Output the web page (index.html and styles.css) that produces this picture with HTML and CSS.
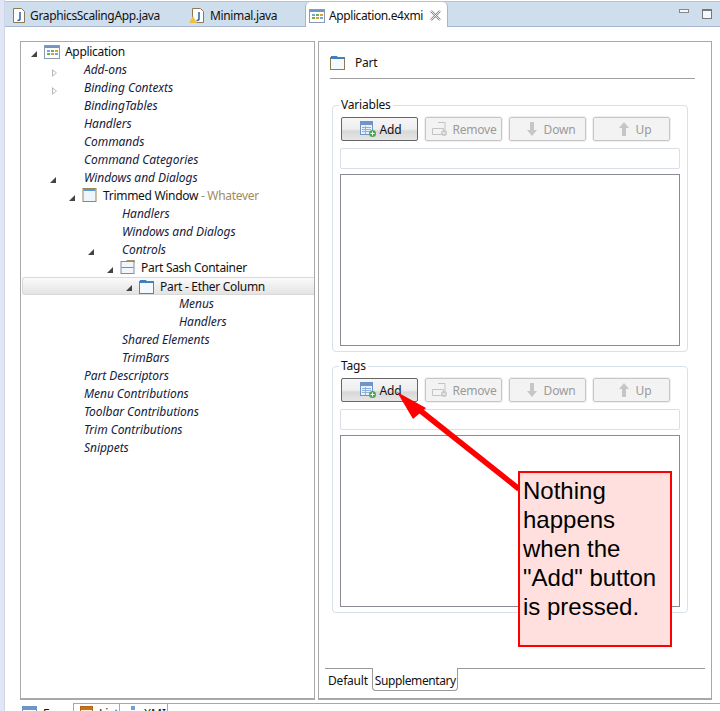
FILE: index.html
```html
<!DOCTYPE html>
<html lang="en">
<head>
    <meta charset="UTF-8">
    <title>Application.e4xmi</title>
    <link rel="stylesheet" href="styles.css">
</head>
<body>
    <svg class="defs" width="0" height="0">
        <symbol id="i-app" viewBox="0 0 16 14">
            <rect x=".5" y=".5" width="15" height="13" fill="#fff" stroke="#8a9ab5"/>
            <rect x="1" y="1" width="14" height="2" fill="#6f94c8"/>
            <rect x="3" y="5" width="3" height="2" fill="#6fa8dc"/>
            <rect x="7" y="5" width="3" height="2" fill="#70b04c"/>
            <rect x="11" y="5" width="3" height="2" fill="#e0a030"/>
            <rect x="3" y="8" width="3" height="2" fill="#70b04c"/>
            <rect x="7" y="8" width="3" height="2" fill="#e0a030"/>
            <rect x="11" y="8" width="3" height="2" fill="#6fa8dc"/>
        </symbol>
        <symbol id="i-part" viewBox="0 0 16 15">
            <rect x=".5" y="2.500" width="14" height="12" fill="#f4f9fd" stroke="#8d7a55"/>
            <path d="M1 2.500V1h6l1 1.500h6.500V4H1z" fill="#3f7fc0"/>
        </symbol>
        <symbol id="i-win" viewBox="0 0 15 15">
            <rect x=".5" y=".5" width="13" height="13" fill="#eef6fc" stroke="#9a8558"/>
            <rect x="1" y="1" width="12" height="2" fill="#5b9bd5"/>
        </symbol>
        <symbol id="i-sash" viewBox="0 0 15 15">
            <rect x=".5" y="1.500" width="13" height="12" fill="#f2f6fb" stroke="#7d8cad"/>
            <path d="M1 7.500h12" stroke="#7d8cad"/>
            <path d="M6 .5h8v2" fill="none" stroke="#a3946d"/>
        </symbol>
        <symbol id="i-table" viewBox="0 0 16 16">
            <rect x=".5" y=".5" width="12" height="13" fill="#e8f0fa" stroke="#6f94c8"/>
            <rect x="1" y="1" width="11" height="3" fill="#6f94c8"/>
            <path d="M2 6.500h9M2 8.500h9M2 10.500h9M5.500 5v8" stroke="#8fb0d8"/>
            <circle cx="12.500" cy="12.500" r="3.500" fill="#4ea64e"/>
            <path d="M10.500 12.500h4M12.500 10.500v4" stroke="#fff"/>
        </symbol>
        <symbol id="i-remove" viewBox="0 0 16 16">
            <path d="M6 1.500h7v10M.5 7.500h11v6H.5z" fill="none" stroke="#c4c4c4"/>
            <circle cx="12" cy="12" r="3" fill="#c8c8c8"/>
            <path d="M10.500 12h3" stroke="#fff"/>
        </symbol>
        <symbol id="i-down" viewBox="0 0 10 14">
            <path d="M3 0h4v8h3l-5 6-5-6h3z" fill="#c6c6c6"/>
        </symbol>
        <symbol id="i-up" viewBox="0 0 10 14">
            <path d="M3 14h4V6h3L5 0 0 6h3z" fill="#c6c6c6"/>
        </symbol>
    </svg>

    <div class="side-strip"></div>

    <div class="editor">
        <div class="tabbar">
            <div class="tab tab-java">
                <svg width="12" height="15" viewBox="0 0 12 15"><path d="M.5.5h8l3 3v11H.5z" fill="#fff" stroke="#8d7a55"/><path d="M7 4v7q0 1.500-2.500 1.500" fill="none" stroke="#2b5fa8" stroke-width="1.500"/></svg>
                <span>GraphicsScalingApp.java</span>
            </div>
            <div class="tab tab-min">
                <svg width="15" height="15" viewBox="0 0 15 15"><path d="M3.500.5h8l3 3v11h-11z" fill="#fff" stroke="#8d7a55"/><path d="M10 4v7q0 1.500-2.500 1.500" fill="none" stroke="#2b5fa8" stroke-width="1.500"/><path d="M4 8l4 7H0z" fill="#f0c040"/></svg>
                <span>Minimal.java</span>
            </div>
            <div class="tab tab-active">
                <svg width="16" height="14"><use href="#i-app"/></svg>
                <span>Application.e4xmi</span>
                <svg class="close" width="11" height="11" viewBox="0 0 11 11"><path d="M1 1l9 9M10 1l-9 9" stroke="#8a8a8a" stroke-width="2.400"/><path d="M1 1l9 9M10 1l-9 9" stroke="#fff" stroke-width=".8"/></svg>
            </div>
            <div class="tab-tools">
                <span class="btn-min"></span>
                <span class="btn-max"></span>
            </div>
        </div>

        <div class="workspace">
            <div class="tree">
                <div class="row lv0"><i class="twisty open"></i><svg class="node" width="16" height="14"><use href="#i-app"/></svg><span>Application</span></div>
                <div class="row lv1"><i class="twisty closed"></i><em>Add-ons</em></div>
                <div class="row lv1"><i class="twisty closed"></i><em>Binding Contexts</em></div>
                <div class="row lv1"><i class="twisty"></i><em>BindingTables</em></div>
                <div class="row lv1"><i class="twisty"></i><em>Handlers</em></div>
                <div class="row lv1"><i class="twisty"></i><em>Commands</em></div>
                <div class="row lv1"><i class="twisty"></i><em>Command Categories</em></div>
                <div class="row lv1"><i class="twisty open"></i><em>Windows and Dialogs</em></div>
                <div class="row lv2"><i class="twisty open"></i><svg class="node" width="15" height="15"><use href="#i-win"/></svg><span>Trimmed Window <b class="muted">- Whatever</b></span></div>
                <div class="row lv3"><i class="twisty"></i><em>Handlers</em></div>
                <div class="row lv3"><i class="twisty"></i><em>Windows and Dialogs</em></div>
                <div class="row lv3"><i class="twisty open"></i><em>Controls</em></div>
                <div class="row lv4"><i class="twisty open"></i><svg class="node" width="15" height="15"><use href="#i-sash"/></svg><span>Part Sash Container</span></div>
                <div class="row lv5 selected"><i class="twisty open"></i><svg class="node" width="16" height="15"><use href="#i-part"/></svg><span>Part - Ether Column</span></div>
                <div class="row lv6"><i class="twisty"></i><em>Menus</em></div>
                <div class="row lv6"><i class="twisty"></i><em>Handlers</em></div>
                <div class="row lv3"><i class="twisty"></i><em>Shared Elements</em></div>
                <div class="row lv3"><i class="twisty"></i><em>TrimBars</em></div>
                <div class="row lv1"><i class="twisty"></i><em>Part Descriptors</em></div>
                <div class="row lv1"><i class="twisty"></i><em>Menu Contributions</em></div>
                <div class="row lv1"><i class="twisty"></i><em>Toolbar Contributions</em></div>
                <div class="row lv1"><i class="twisty"></i><em>Trim Contributions</em></div>
                <div class="row lv1"><i class="twisty"></i><em>Snippets</em></div>
            </div>

            <div class="details">
                <div class="details-body">
                    <div class="part-title">
                        <svg width="16" height="15"><use href="#i-part"/></svg>
                        <span>Part</span>
                    </div>

                    <fieldset class="group">
                        <legend>Variables</legend>
                        <div class="buttons">
                            <button class="btn active"><svg width="16" height="16"><use href="#i-table"/></svg>Add</button>
                            <button class="btn"><svg width="16" height="16"><use href="#i-remove"/></svg>Remove</button>
                            <button class="btn move"><svg width="10" height="14"><use href="#i-down"/></svg>Down</button>
                            <button class="btn move"><svg width="10" height="14"><use href="#i-up"/></svg>Up</button>
                        </div>
                        <div class="field"></div>
                        <div class="list"></div>
                    </fieldset>

                    <fieldset class="group">
                        <legend>Tags</legend>
                        <div class="buttons">
                            <button class="btn active"><svg width="16" height="16"><use href="#i-table"/></svg>Add</button>
                            <button class="btn"><svg width="16" height="16"><use href="#i-remove"/></svg>Remove</button>
                            <button class="btn move"><svg width="10" height="14"><use href="#i-down"/></svg>Down</button>
                            <button class="btn move"><svg width="10" height="14"><use href="#i-up"/></svg>Up</button>
                        </div>
                        <div class="field"></div>
                        <div class="list"></div>
                    </fieldset>
                </div>

                <div class="sub-tabs">
                    <div class="sub-tab">Default</div>
                    <div class="sub-tab current">Supplementary</div>
                </div>
            </div>
        </div>

        <div class="bottom-tabs">
            <div class="bottom-tab form-tab">
                <svg width="15" height="12" viewBox="0 0 15 12"><rect x=".5" y=".5" width="14" height="11" fill="#fff" stroke="#6f94c8"/><rect x="1" y="1" width="13" height="3" fill="#6f94c8"/><rect x="2" y="6" width="4" height="2" fill="#4a80c8"/></svg>
                <span>Form</span>
            </div>
            <div class="bottom-tab list-tab">
                <svg width="13" height="12" viewBox="0 0 13 12"><rect x=".5" y=".5" width="12" height="11" fill="#fff4dc" stroke="#b5651d"/><rect x="1" y="1" width="11" height="3" fill="#c8701e"/></svg>
                <span>List</span>
            </div>
            <div class="bottom-tab xmi-tab">
                <svg width="8" height="12" viewBox="0 0 8 12"><rect x="1" y="0" width="4" height="4" fill="#6fa0dc"/><rect x="2" y="5" width="2" height="7" fill="#a8a8a8"/></svg>
                <span>XMI</span>
            </div>
            <div class="bottom-rest"></div>
        </div>
    </div>

    <svg class="arrow" width="720" height="711" viewBox="0 0 720 711">
        <path d="M519 489L412 404" stroke="#ff0000" stroke-width="5.500"/>
        <path d="M397 392L426 408L413 419z" fill="#ff0000"/>
    </svg>
    <div class="callout">Nothing happens when the "Add" button is pressed.</div>
</body>
</html>
```

FILE: styles.css
```css
*{
    margin: 0;
    padding: 0;
    box-sizing: border-box;
}

html, body{
    height: 711px;
    overflow: hidden;
}

body{
    background-color: #fff;
    display: flex;
    font-family: "Noto Sans", sans-serif;
    font-size: 12px;
    color: #111;
    position: relative;
}

.defs{
    position: absolute;
}

.side-strip{
    width: 5px;
    flex: none;
    background-color: #e1e6f6;
    border-right: 1px solid #cfd5e6;
}

.editor{
    flex: 1;
    min-width: 0;
    display: flex;
    flex-direction: column;
}

/* top tabs */
.tabbar{
    height: 26px;
    flex: none;
    margin-top: 1px;
    display: flex;
    background-color: #cfdeed;
    border-top: 1px solid #b6c1d8;
    border-bottom: 1px solid #a9b5cc;
}

.tab{
    display: flex;
    align-items: center;
    height: 24px;
    padding-top: 2px;
    letter-spacing: -0.35px;
}

.tab-java{
    width: 175px;
    padding-left: 8px;
    gap: 5px;
}

.tab-min{
    width: 125px;
    padding-left: 9px;
    gap: 6px;
}

.tab-active{
    width: 143px;
    height: 25px;
    padding-left: 3px;
    gap: 4px;
    letter-spacing: -0.4px;
    background-color: #fff;
    border-left: 1px solid #a9b5cc;
    border-right: 1px solid #a9b5cc;
    border-top-left-radius: 5px;
    border-top-right-radius: 5px;
}

.close{
    margin-left: 3px;
}

.tab-tools{
    margin-left: auto;
    display: flex;
    align-items: flex-start;
    gap: 13px;
    padding: 7px 8px 0 0;
}

.btn-min{
    width: 10px;
    height: 4px;
    background-color: #f4f7fb;
    border: 1px solid #888;
}

.btn-max{
    width: 10px;
    height: 10px;
    background-color: #f4f7fb;
    border: 1px solid #777;
    border-top-width: 2px;
}

/* main area */
.workspace{
    height: 659px;
    flex: none;
    margin-top: 14px;
    display: flex;
    padding-left: 15px;
    gap: 3px;
}

.tree{
    width: 295px;
    flex: none;
    border: 1px solid #a8a8a8;
    border-bottom-width: 2px;
    padding-top: 1px;
}

.lv0{ --lv: 0; }
.lv1{ --lv: 1; }
.lv2{ --lv: 2; }
.lv3{ --lv: 3; }
.lv4{ --lv: 4; }
.lv5{ --lv: 5; }
.lv6{ --lv: 6; }

.row{
    height: 18px;
    display: flex;
    align-items: center;
    white-space: nowrap;
    overflow: hidden;
    letter-spacing: -0.3px;
    padding-left: calc(8px + 19px * var(--lv));
    padding-bottom: 1px;
}

.row em{
    color: #14213d;
    letter-spacing: -0.05px;
}

.twisty{
    width: 36px;
    height: 14px;
    flex: none;
    position: relative;
}

.row:has(.node) .twisty{
    width: 15px;
}

.row .node{
    flex: none;
    width: 16px;
    margin-right: 5px;
}

.twisty.open::before{
    content: "";
    position: absolute;
    left: 2px;
    top: 6px;
    border-style: solid;
    border-width: 0 0 6px 6px;
    border-color: transparent transparent #444 transparent;
}

.twisty.closed::before{
    content: "";
    position: absolute;
    left: 4px;
    top: 6px;
    border-style: solid;
    border-width: 4px 0 4px 5px;
    border-color: transparent transparent transparent #b8b8b8;
}

.twisty.closed::after{
    content: "";
    position: absolute;
    left: 5px;
    top: 8px;
    border-style: solid;
    border-width: 2px 0 2px 3px;
    border-color: transparent transparent transparent #fff;
}

.selected{
    margin-left: 1px;
    background: linear-gradient(#fbfbfb, #e3e3e3);
    border: 1px solid #d9d9d9;
    border-right: none;
    border-radius: 3px 0 0 3px;
    padding-left: calc(6px + 19px * var(--lv));
    padding-bottom: 0;
}

.muted{
    font-weight: normal;
    color: #a38a5e;
    letter-spacing: -0.3px;
}

/* details side */
.details{
    width: 394px;
    flex: none;
    border: 1px solid #a8a8a8;
    border-bottom-width: 2px;
    display: flex;
    flex-direction: column;
}

.details-body{
    flex: 1;
    padding: 13px 16px 0 11px;
}

.part-title{
    display: flex;
    align-items: center;
    gap: 9px;
    height: 24px;
    width: 365px;
    padding-bottom: 9px;
    letter-spacing: -0.2px;
    border-bottom: 1px solid #a0a0a0;
}

.part-title + .group{
    margin-top: 19px;
}

.group{
    width: 356px;
    height: 254px;
    margin: 7px 0 0 2px;
    border: 1px solid #d8e0ea;
    border-radius: 4px;
    padding: 5px 7px 0 7px;
}

.group legend{
    margin-left: -1px;
    padding: 0 2px;
    line-height: 14px;
    letter-spacing: -0.2px;
}

.buttons{
    display: flex;
    gap: 7px;
    padding-left: 1px;
}

.btn{
    width: 77px;
    height: 24px;
    display: flex;
    align-items: center;
    justify-content: center;
    gap: 4px;
    padding-left: 2px;
    font: inherit;
    letter-spacing: -0.2px;
    color: #9a9a9a;
    background-color: #f3f3f3;
    border: 1px solid #c6c6c6;
    border-radius: 2px;
    outline: 1px solid #f0f0f0;
}

.btn.move{
    gap: 7px;
    padding-left: 7px;
}

.btn.active{
    color: #111;
    background: linear-gradient(#f6f6f6 0, #eeeeee 50%, #d8d8d8 60%, #e6e6e6 100%);
    border-color: #666;
    outline: none;
}

.field{
    height: 21px;
    margin-top: 7px;
    border: 1px solid #d9dfe8;
    border-radius: 2px;
}

.list{
    height: 172px;
    margin-top: 5px;
    border: 1px solid #8b8b95;
}

.sub-tabs{
    height: 23px;
    margin: 0 6px 7px 6px;
    display: flex;
    border-top: 1px solid #9a9a9a;
}

.sub-tab{
    padding: 3px 3px 0 3px;
    height: 22px;
    letter-spacing: -0.2px;
}

.sub-tab.current{
    margin-top: -1px;
    height: 23px;
    width: 86px;
    margin-left: 1px;
    padding: 4px 2px 0 2px;
    letter-spacing: -0.4px;
    background-color: #fff;
    border: 1px solid #9a9a9a;
    border-top: none;
    border-radius: 0 0 4px 4px;
}

/* bottom tabs, cut off by the window */
.bottom-tabs{
    flex: 1;
    display: flex;
    margin-top: 3px;
    padding-left: 15px;
    overflow: hidden;
}

.bottom-tab{
    height: 30px;
    flex: none;
    display: flex;
    align-items: flex-start;
    gap: 6px;
    padding-top: 2px;
    border-top: 1px solid #a8a8a8;
    border-left: 1px solid #a8a8a8;
}

.bottom-tab span{
    line-height: 16px;
}

.form-tab{
    width: 53px;
    padding-left: 2px;
    border-left: none;
    border-top-color: transparent;
}

.list-tab{
    width: 46px;
    padding-left: 6px;
}

.xmi-tab{
    width: 49px;
    padding-left: 10px;
    border-right: 1px solid #a8a8a8;
}

.bottom-rest{
    flex: 1;
    border-top: 1px solid #a8a8a8;
}

/* annotation over the screenshot */
.arrow{
    position: absolute;
    left: 0;
    top: 0;
    pointer-events: none;
}

.callout{
    position: absolute;
    left: 518px;
    top: 471px;
    width: 154px;
    height: 176px;
    padding: 3px 3px 0 3px;
    background-color: #ffe0de;
    border: 2px solid #ff0000;
    font-family: "Liberation Sans", sans-serif;
    font-size: 24px;
    line-height: 29px;
    color: #000;
}
```
